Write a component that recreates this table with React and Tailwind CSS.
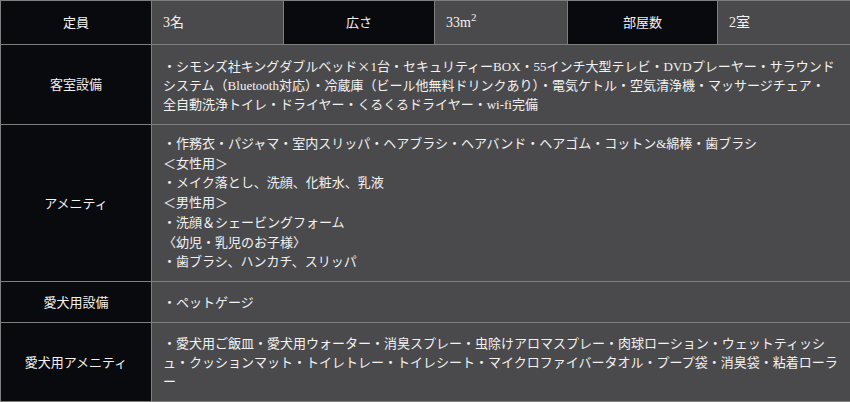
import React from "react";

const th = "bg-[#080a0d] border border-[#7f7f7f] text-center align-middle font-normal p-0";
const td = "bg-[#4a4a4c] border border-[#7f7f7f] text-left align-middle px-[11px] py-0";
const tdTop = "bg-[#4a4a4c] border border-[#7f7f7f] text-left align-middle px-[11px] py-0 text-[14px]";

function Lines({ lines }) {
  return (
    <div>
      {lines.map((l, i) => (
        <div key={i} className="whitespace-nowrap">{l}</div>
      ))}
    </div>
  );
}

const X = () => <span className="[font-family:'Noto_Sans_CJK_JP',sans-serif]">×</span>;

export default function App() {
  return (
    <div className="w-[850px] h-[402px] bg-[#4a4a4c] text-[#f2f2f2] text-[13px] leading-[19px] [font-family:'Liberation_Serif','Noto_Sans_CJK_JP',serif]">
      <table className="w-[850px] table-fixed border-collapse">
        <colgroup>
          <col className="w-[151px]" />
          <col className="w-[132px]" />
          <col className="w-[151px]" />
          <col className="w-[133px]" />
          <col className="w-[150px]" />
          <col className="w-[133px]" />
        </colgroup>
        <tbody>
          <tr className="h-[44px]">
            <th className={th}>定員</th>
            <td className={tdTop}>3名</td>
            <th className={th}>広さ</th>
            <td className={tdTop}>
              33m<span className="inline-block align-top text-[11px] leading-[11px] -mt-[1px]">2</span>
            </td>
            <th className={th}>部屋数</th>
            <td className={tdTop}>2室</td>
          </tr>
          <tr className="h-[80px]">
            <th className={th}>客室設備</th>
            <td className={td} colSpan={5}>
              <div>
                <div className="whitespace-nowrap">
                  ・シモンズ社キングダブルベッド<X />1台・セキュリティーBOX・55インチ大型テレビ・DVDプレーヤー・サラウンド
                </div>
                <div className="whitespace-nowrap">
                  システム（Bluetooth対応）・冷蔵庫（ビール他無料ドリンクあり）・電気ケトル・空気清浄機・マッサージチェア・
                </div>
                <div className="whitespace-nowrap">
                  全自動洗浄トイレ・ドライヤー・くるくるドライヤー・wi-fi完備
                </div>
              </div>
            </td>
          </tr>
          <tr className="h-[157px]">
            <th className={th}>アメニティ</th>
            <td className={td} colSpan={5}>
              <div className="leading-[19.7px]">
                <Lines
                  lines={[
                    "・作務衣・パジャマ・室内スリッパ・ヘアブラシ・ヘアバンド・ヘアゴム・コットン&綿棒・歯ブラシ",
                    "＜女性用＞",
                    "・メイク落とし、洗顔、化粧水、乳液",
                    "＜男性用＞",
                    "・洗顔＆シェービングフォーム",
                    "〈幼児・乳児のお子様〉",
                    "・歯ブラシ、ハンカチ、スリッパ",
                  ]}
                />
              </div>
            </td>
          </tr>
          <tr className="h-[41px]">
            <th className={th}>愛犬用設備</th>
            <td className={td} colSpan={5}>・ペットゲージ</td>
          </tr>
          <tr className="h-[79px]">
            <th className={th}>愛犬用アメニティ</th>
            <td className={td} colSpan={5}>
              <Lines
                lines={[
                  "・愛犬用ご飯皿・愛犬用ウォーター・消臭スプレー・虫除けアロマスプレー・肉球ローション・ウェットティッシ",
                  "ュ・クッションマット・トイレトレー・トイレシート・マイクロファイバータオル・プープ袋・消臭袋・粘着ローラ",
                  "ー",
                ]}
              />
            </td>
          </tr>
        </tbody>
      </table>
    </div>
  );
}
